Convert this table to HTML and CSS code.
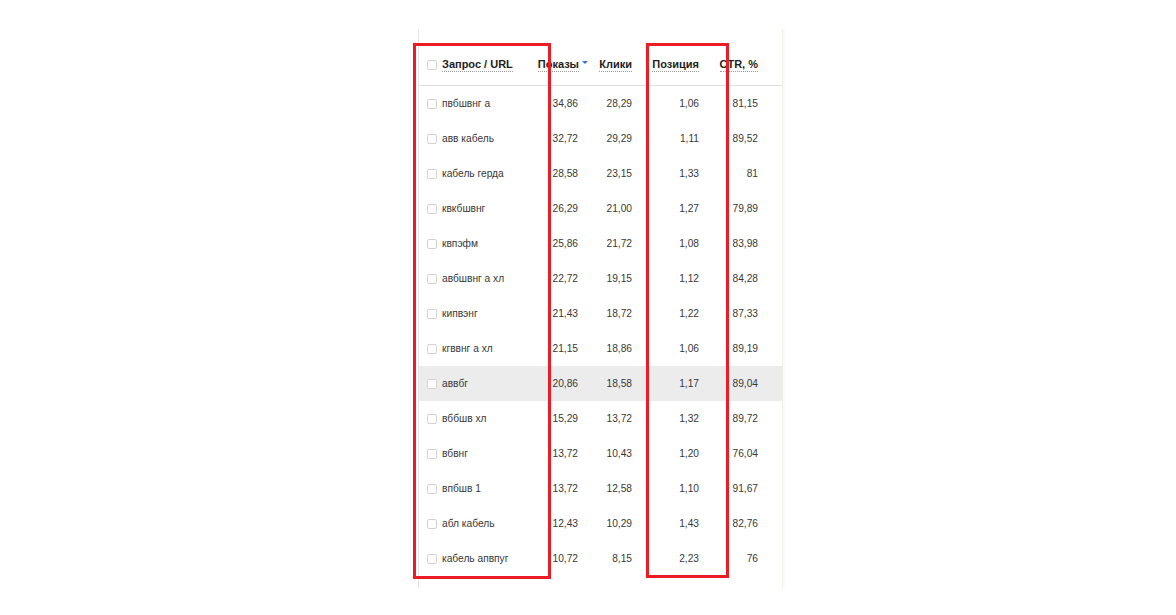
FILE: index.html
```html
<!DOCTYPE html>
<html lang="ru">
<head>
<meta charset="utf-8">
<title>Запросы</title>
<link rel="stylesheet" href="styles.css">
</head>
<body>
<div class="page">
  <div class="panel">
    <div class="row head">
      <div class="cell q"><span class="cb"></span><span class="ht">Запрос / URL</span></div>
      <div class="cell n sort"><span class="ht">Показы</span><span class="arrow"></span></div>
      <div class="cell n"><span class="ht">Клики</span></div>
      <div class="cell n"><span class="ht">Позиция</span></div>
      <div class="cell n"><span class="ht">CTR, %</span></div>
      <div class="cell"></div>
    </div>
    <div class="row"><div class="cell q"><span class="cb"></span>пвбшвнг а</div><div class="cell n v1">34,86</div><div class="cell n">28,29</div><div class="cell n">1,06</div><div class="cell n">81,15</div><div class="cell"></div></div>
    <div class="row"><div class="cell q"><span class="cb"></span>авв кабель</div><div class="cell n v1">32,72</div><div class="cell n">29,29</div><div class="cell n">1,11</div><div class="cell n">89,52</div><div class="cell"></div></div>
    <div class="row"><div class="cell q"><span class="cb"></span>кабель герда</div><div class="cell n v1">28,58</div><div class="cell n">23,15</div><div class="cell n">1,33</div><div class="cell n">81</div><div class="cell"></div></div>
    <div class="row"><div class="cell q"><span class="cb"></span>квкбшвнг</div><div class="cell n v1">26,29</div><div class="cell n">21,00</div><div class="cell n">1,27</div><div class="cell n">79,89</div><div class="cell"></div></div>
    <div class="row"><div class="cell q"><span class="cb"></span>квпэфм</div><div class="cell n v1">25,86</div><div class="cell n">21,72</div><div class="cell n">1,08</div><div class="cell n">83,98</div><div class="cell"></div></div>
    <div class="row"><div class="cell q"><span class="cb"></span>авбшвнг а хл</div><div class="cell n v1">22,72</div><div class="cell n">19,15</div><div class="cell n">1,12</div><div class="cell n">84,28</div><div class="cell"></div></div>
    <div class="row"><div class="cell q"><span class="cb"></span>кипвэнг</div><div class="cell n v1">21,43</div><div class="cell n">18,72</div><div class="cell n">1,22</div><div class="cell n">87,33</div><div class="cell"></div></div>
    <div class="row"><div class="cell q"><span class="cb"></span>кгввнг а хл</div><div class="cell n v1">21,15</div><div class="cell n">18,86</div><div class="cell n">1,06</div><div class="cell n">89,19</div><div class="cell"></div></div>
    <div class="row hl"><div class="cell q"><span class="cb"></span>аввбг</div><div class="cell n v1">20,86</div><div class="cell n">18,58</div><div class="cell n">1,17</div><div class="cell n">89,04</div><div class="cell"></div></div>
    <div class="row"><div class="cell q"><span class="cb"></span>вббшв хл</div><div class="cell n v1">15,29</div><div class="cell n">13,72</div><div class="cell n">1,32</div><div class="cell n">89,72</div><div class="cell"></div></div>
    <div class="row"><div class="cell q"><span class="cb"></span>вбвнг</div><div class="cell n v1">13,72</div><div class="cell n">10,43</div><div class="cell n">1,20</div><div class="cell n">76,04</div><div class="cell"></div></div>
    <div class="row"><div class="cell q"><span class="cb"></span>впбшв 1</div><div class="cell n v1">13,72</div><div class="cell n">12,58</div><div class="cell n">1,10</div><div class="cell n">91,67</div><div class="cell"></div></div>
    <div class="row"><div class="cell q"><span class="cb"></span>абл кабель</div><div class="cell n v1">12,43</div><div class="cell n">10,29</div><div class="cell n">1,43</div><div class="cell n">82,76</div><div class="cell"></div></div>
    <div class="row"><div class="cell q"><span class="cb"></span>кабель апвпуг</div><div class="cell n v1">10,72</div><div class="cell n">8,15</div><div class="cell n">2,23</div><div class="cell n">76</div><div class="cell"></div></div>
    <div class="tail"></div>
  </div>
  <div class="mark mark-q"></div>
  <div class="mark mark-p"></div>
</div>
</body>
</html>
```

FILE: styles.css
```css
html, body {
  margin: 0;
  padding: 0;
  background: #ffffff;
}
body {
  font-family: "Liberation Sans", Arial, sans-serif;
  font-size: 10.2px;
  color: #383838;
}
.page {
  position: relative;
  padding: 29px 0 0 418px;
  height: 586px;
}
.panel {
  width: 363px;
  border-left: 1px solid #e4e4e4;
  border-right: 1px solid #f1efe8;
  box-shadow: 2px 0 2px #fbfaf5;
}
.row {
  display: grid;
  grid-template-columns: 111px 60px 50px 67px 59px 15px;
  height: 35px;
  align-items: center;
}
.row.head {
  height: 56px;
  align-items: start;
  border-bottom: 1px solid #dedede;
  color: #1e1e1e;
  font-size: 11px;
  font-weight: bold;
}
.row.head .cell {
  padding-top: 29px;
  line-height: 13px;
}
.row.hl {
  background: #ececec;
}
.cell {
  white-space: nowrap;
}
.cell.q {
  display: flex;
  align-items: center;
  padding-left: 8px;
  gap: 5px;
}
.cell.n {
  text-align: right;
  padding-right: 8px;
}
.cell.n.v1 {
  padding-right: 12px;
}
.cell.sort {
  padding-right: 2px;
}
.cb {
  display: inline-block;
  width: 8px;
  height: 8px;
  border: 1px solid #d3d3d3;
  border-radius: 2px;
  background: #fff;
  flex: none;
}
.ht {
  display: inline-block;
  border-bottom: 1px dotted #9a9a9a;
}
.arrow {
  display: inline-block;
  width: 0;
  height: 0;
  margin-left: 3px;
  vertical-align: 4px;
  border-left: 3px solid transparent;
  border-right: 3px solid transparent;
  border-top: 3px solid #3a6fd8;
}
.tail {
  height: 12px;
}
.mark {
  position: absolute;
  border: 3.5px solid #ec1c24;
  box-sizing: border-box;
}
.mark-q {
  left: 413px;
  top: 43px;
  width: 138px;
  height: 536px;
}
.mark-p {
  left: 646px;
  top: 43px;
  width: 83px;
  height: 535px;
}
```
